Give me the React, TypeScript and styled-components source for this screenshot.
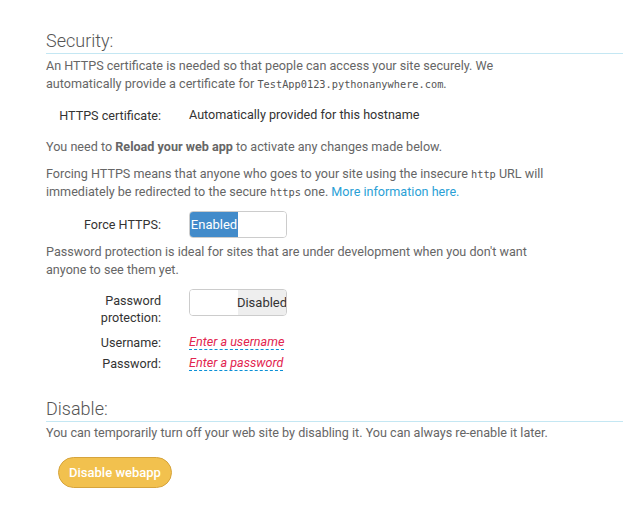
import React from 'react';
import styled, { createGlobalStyle } from 'styled-components';

const GlobalStyle = createGlobalStyle`
  body {
    margin: 0;
    background: #fff;
    font-family: Roboto, "Liberation Sans", Arial, sans-serif;
    font-size: 12.6px;
    color: #666;
  }
`;

const Page = styled.div`
  padding: 31px 0 20px 46px;
`;

const Heading = styled.h3<{ $top?: number }>`
  margin: ${(p) => p.$top ?? 0}px 0 0 0;
  padding-bottom: 2px;
  font-size: 18px;
  line-height: 20px;
  font-weight: 300;
  color: #555;
  border-bottom: 1px solid #c4e7f3;
`;

const Para = styled.p<{ $top: number }>`
  margin: ${(p) => p.$top}px 0 0 0;
  width: 512px;
  line-height: 18px;
`;

const Code = styled.code`
  font-family: "DejaVu Sans Mono", "Liberation Mono", monospace;
  font-size: 10.3px;
  color: #555;
`;

const Link = styled.a`
  color: #2a9fd6;
  text-decoration: none;
`;

const Row = styled.div<{ $top: number; $align?: string }>`
  display: flex;
  align-items: ${(p) => p.$align ?? 'center'};
  margin-top: ${(p) => p.$top}px;
  line-height: 18px;
`;

const Label = styled.div<{ $pad?: number }>`
  width: 115px;
  text-align: right;
  color: #333;
  padding-top: ${(p) => p.$pad ?? 0}px;
  line-height: 17px;
`;

const Value = styled.div`
  margin-left: 28px;
  color: #333;
`;

const Switch = styled.div`
  display: flex;
  width: 96px;
  height: 25px;
  border: 1px solid #ccc;
  border-radius: 4px;
  overflow: hidden;
`;

const Half = styled.span<{ $kind: 'on' | 'off' | 'blank' }>`
  width: 48px;
  display: flex;
  align-items: center;
  justify-content: center;
  font-size: 13px;
  background: ${(p) => (p.$kind === 'on' ? '#428bca' : p.$kind === 'off' ? '#eee' : '#fff')};
  color: ${(p) => (p.$kind === 'on' ? '#fff' : '#333')};
`;

const Editable = styled.span`
  color: #e2254f;
  font-style: italic;
  border-bottom: 1px dashed #0a8fd6;
  line-height: 17px;
`;

const Button = styled.button`
  margin: 15px 0 0 12px;
  width: 114px;
  height: 31px;
  border-radius: 16px;
  border: 1px solid #d6a43c;
  background: #f2c14e;
  color: #fff;
  font-family: Roboto, "Liberation Sans", Arial, sans-serif;
  font-size: 13px;
  font-weight: 500;
  padding: 0;
`;

export default function App() {
  return (
    <>
      <GlobalStyle />
      <Page>
        <Heading>Security:</Heading>
        <Para $top={3}>
          An HTTPS certificate is needed so that people can access your site securely. We
          automatically provide a certificate for <Code>TestApp0123.pythonanywhere.com</Code>.
        </Para>
        <Row $top={13}>
          <Label>HTTPS certificate:</Label>
          <Value>Automatically provided for this hostname</Value>
        </Row>
        <Para $top={14}>
          You need to <strong style={{ fontWeight: 700 }}>Reload your web app</strong> to activate any changes made below.
        </Para>
        <Para $top={9}>
          Forcing HTTPS means that anyone who goes to your site using the insecure <Code>http</Code> URL will
          immediately be redirected to the secure <Code>https</Code> one. <Link href="#">More information here.</Link>
        </Para>
        <Row $top={10}>
          <Label>Force HTTPS:</Label>
          <Value>
            <Switch>
              <Half $kind="on">Enabled</Half>
              <Half $kind="blank" />
            </Switch>
          </Value>
        </Row>
        <Para $top={5}>
          Password protection is ideal for sites that are under development when you don't want
          anyone to see them yet.
        </Para>
        <Row $top={10} $align="flex-start">
          <Label $pad={3}>Password protection:</Label>
          <Value>
            <Switch>
              <Half $kind="blank" />
              <Half $kind="off">Disabled</Half>
            </Switch>
          </Value>
        </Row>
        <Row $top={7}>
          <Label>Username:</Label>
          <Value>
            <Editable>Enter a username</Editable>
          </Value>
        </Row>
        <Row $top={3}>
          <Label>Password:</Label>
          <Value>
            <Editable>Enter a password</Editable>
          </Value>
        </Row>
        <Heading $top={27}>Disable:</Heading>
        <Para $top={2}>
          You can temporarily turn off your web site by disabling it. You can always re-enable it later.
        </Para>
        <Button>Disable webapp</Button>
      </Page>
    </>
  );
}
